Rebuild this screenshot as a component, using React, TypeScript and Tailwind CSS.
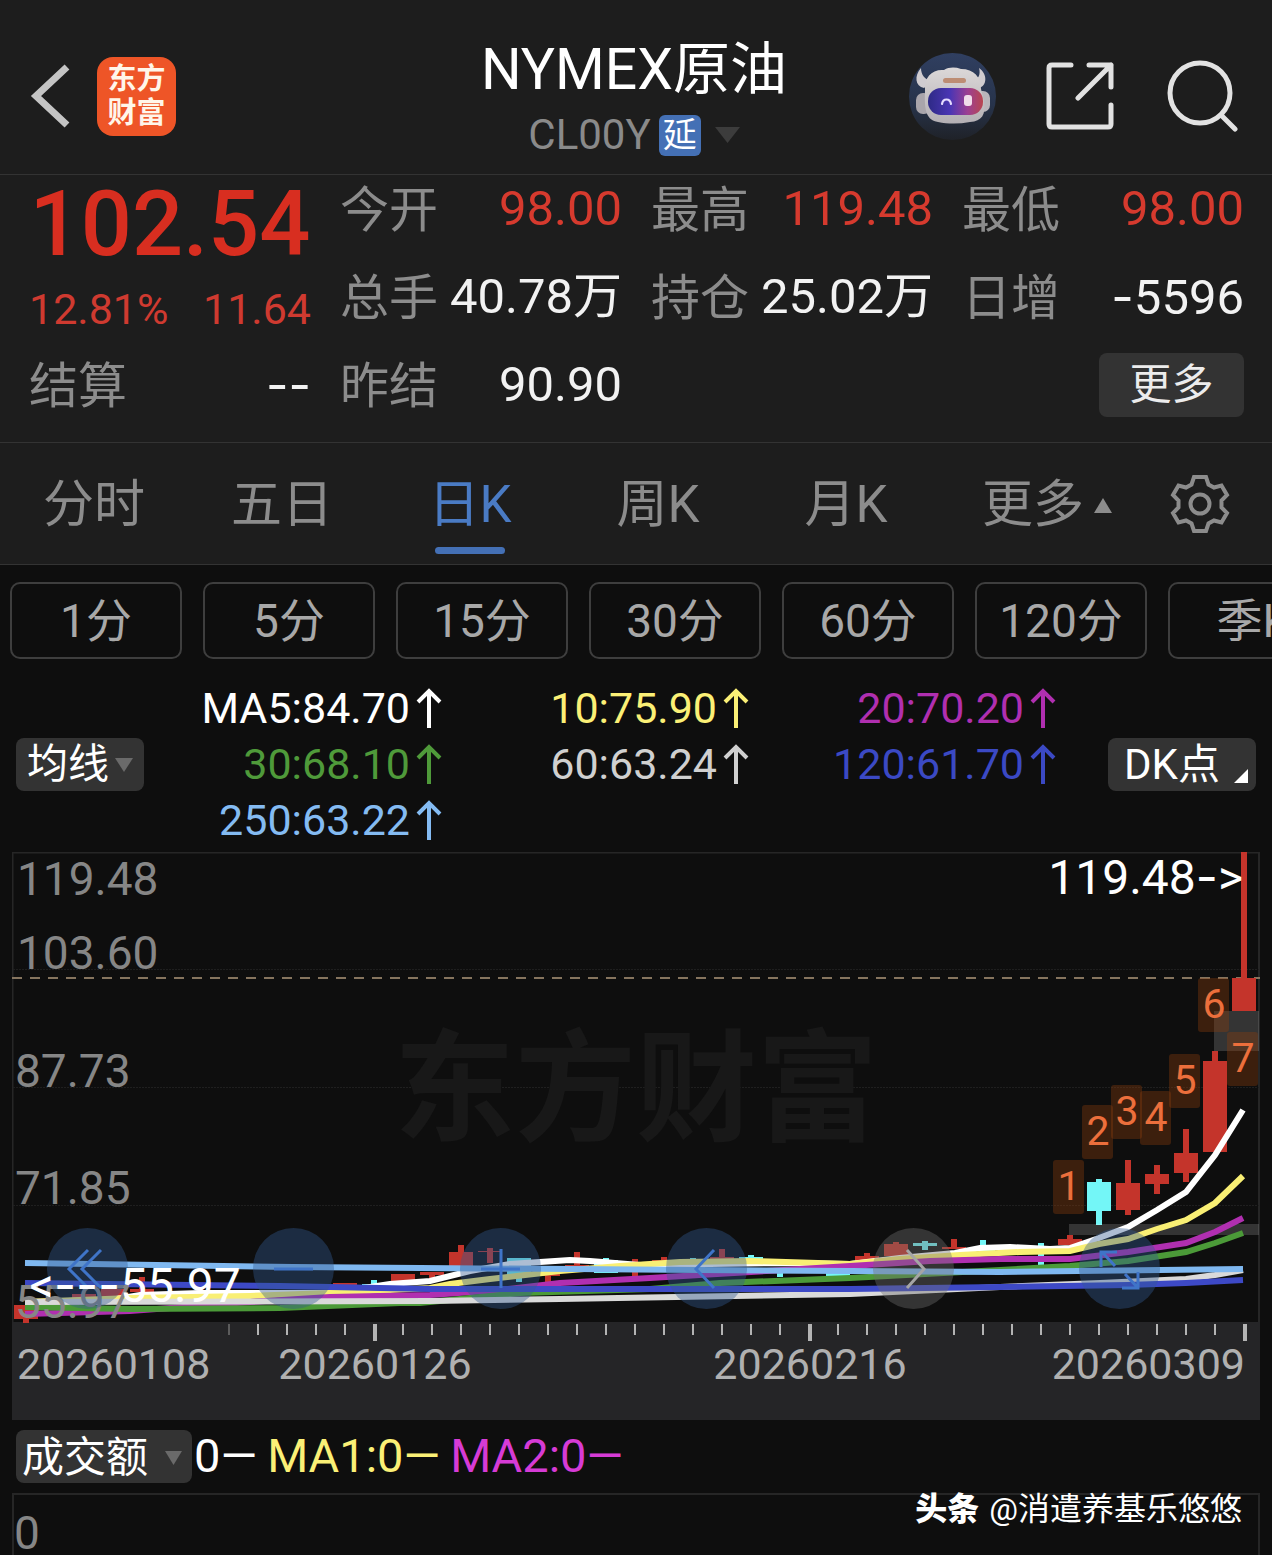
import type { ReactNode } from "react";

const UP = "#c4342b";
const DOWN = "#73f6f7";

function Triangle({ up = false, className }: { up?: boolean; className: string }) {
  return (
    <svg viewBox="0 0 24 16" className={className} aria-hidden="true" preserveAspectRatio="none">
      <path d={up ? "M0 16 12 0 24 16Z" : "M0 0 12 16 24 0Z"} fill="currentColor" />
    </svg>
  );
}

function RobotIcon() {
  return (
    <svg viewBox="0 0 87 87" className="size-[87px]" aria-hidden="true">
      <defs>
        <linearGradient id="disc" x1="0" y1="0" x2="0" y2="1">
          <stop offset="0" stopColor="#303f61" />
          <stop offset="0.6" stopColor="#27334a" />
          <stop offset="1" stopColor="#1f2228" />
        </linearGradient>
        <linearGradient id="visor" x1="0" y1="0" x2="1" y2="0">
          <stop offset="0" stopColor="#2e2a86" />
          <stop offset="0.4" stopColor="#4a35b4" />
          <stop offset="0.72" stopColor="#9c3f92" />
          <stop offset="1" stopColor="#b8454f" />
        </linearGradient>
        <linearGradient id="shell" x1="0" y1="0" x2="0" y2="1">
          <stop offset="0" stopColor="#dcd8d8" />
          <stop offset="1" stopColor="#b3afb4" />
        </linearGradient>
      </defs>
      <circle cx="43.500" cy="43.500" r="43.500" fill="url(#disc)" />
      <path d="M12 15c-7 8-6 18 3 20l8-7c-7-1-11-6-11-13Z" fill="#d0ccd0" />
      <path d="M70 15c9 6 8 18 0 20l-7-7c6-1 9-6 7-13Z" fill="#d0ccd0" />
      <rect x="7" y="40" width="15" height="21" rx="7" fill="#a9a5ab" />
      <rect x="66" y="38" width="15" height="21" rx="7" fill="#b9b5ba" />
      <path d="M16 38c-1-14 7-22 19-21 5-3 11-3 17-1 13 0 20 8 20 20l3 12c2 14-2 20-14 21-11 2-22 2-32 0-11-2-14-10-13-31Z" fill="url(#shell)" />
      <rect x="34" y="25" width="23" height="5" rx="2.500" fill="#bd8d74" />
      <rect x="19" y="35" width="55" height="27" rx="13" fill="url(#visor)" />
      <path d="M33 51c1-6 8-6 9 0" fill="none" stroke="#e6dcff" strokeWidth="2.200" strokeLinecap="round" />
      <rect x="55" y="42" width="8" height="11" rx="3" fill="#f1dcea" />
    </svg>
  );
}

function GearIcon() {
  return (
    <svg viewBox="0 0 62 62" className="size-[62px]" fill="none" stroke="currentColor" strokeWidth="4" aria-hidden="true">
      <path d="M25 4H37L39.500 11.500 45 14.500 52.500 12.500 58 22 52.500 27.500V34.500L58 40 52.500 49.500 45 47.500 39.500 50.500 37 58H25L22.500 50.500 17 47.500 9.500 49.500 4 40 9.500 34.500V27.500L4 22 9.500 12.500 17 14.500 22.500 11.500Z" />
      <circle cx="31" cy="31" r="9.500" />
    </svg>
  );
}

function Header() {
  return (
    <header className="grid grid-cols-[1fr_auto_1fr] items-center border-b border-[#333] pt-6 pr-[34px] pb-1.5 pl-[30px]">
      <div className="flex items-center gap-[27px]">
        <button aria-label="返回" className="text-[#c4c4c4]">
          <svg viewBox="0 0 40 64" className="h-16 w-10" fill="none" stroke="currentColor" strokeWidth="7" aria-hidden="true">
            <path d="M37 3 6 32 37 61" />
          </svg>
        </button>
        <a
          href="#home"
          className="flex size-[79px] flex-col items-center justify-center rounded-2xl bg-[#ee5527] text-[29px] leading-[34px] font-bold text-[#fff6ea]"
        >
          <span>东方</span>
          <span>财富</span>
        </a>
      </div>
      <div className="flex h-36 flex-col items-center pt-[13px]">
        <h1 className="text-[57px] leading-[66px] text-white">NYMEX原油</h1>
        <button className="flex items-center gap-2 text-[42px] leading-[64px] text-[#8a8a8a]">
          CL00Y
          <span className="flex h-[41px] w-[42px] items-center justify-center rounded-md bg-[#4470b5] text-[34px] text-white">
            延
          </span>
          <Triangle className="ml-1.5 h-4 w-[25px] text-[#3c3c3c]" />
        </button>
      </div>
      <div className="flex items-center justify-end text-[#e2e2e2]">
        <button aria-label="智能助手">
          <RobotIcon />
        </button>
        <button aria-label="分享" className="ml-[50px]">
          <svg viewBox="0 0 68 68" className="size-[68px]" fill="none" stroke="currentColor" strokeWidth="5" strokeLinecap="round" strokeLinejoin="round" aria-hidden="true">
            <path d="M25 3H6Q3 3 3 6V62Q3 65 6 65H62Q65 65 65 62V43M43 3H65V25M65 3 32 36" />
          </svg>
        </button>
        <button aria-label="搜索" className="ml-[52px]">
          <svg viewBox="0 0 72 72" className="size-[72px]" fill="none" stroke="currentColor" strokeWidth="5" strokeLinecap="round" aria-hidden="true">
            <circle cx="34" cy="33" r="30" />
            <path d="M55 55 69 69" />
          </svg>
        </button>
      </div>
    </header>
  );
}

function Dash({ children }: { children: string }) {
  return <span className="font-[Inter]">{children}</span>;
}

function Stat({ label, up = false, children }: { label: string; up?: boolean; children: ReactNode }) {
  return (
    <div className="flex items-center justify-between">
      <dt className="pt-1 text-[#8c8c8c]">{label}</dt>
      <dd className={up ? "text-[#d63a2e]" : "text-[#f2f2f2]"}>{children}</dd>
    </div>
  );
}

function Quote() {
  return (
    <section className="border-b border-[#333] pr-7 pb-[23px] pl-[29px]">
      <dl className="grid grid-cols-4 gap-x-[29px] gap-y-5 text-[49px] leading-[64px] whitespace-nowrap">
        <div className="row-span-2 flex flex-col text-[#d82e20]">
          <dd className="pt-1 text-center text-[90px] leading-[92px] font-medium">102.54</dd>
          <dd className="flex justify-between pt-4 text-[43px] leading-11 text-[#cf3a30]">
            <span>12.81%</span>
            <span>11.64</span>
          </dd>
        </div>
        <Stat label="今开" up>98.00</Stat>
        <Stat label="最高" up>119.48</Stat>
        <Stat label="最低" up>98.00</Stat>
        <Stat label="总手">40.78万</Stat>
        <Stat label="持仓">25.02万</Stat>
        <Stat label="日增">
          <Dash>-</Dash>5596
        </Stat>
        <Stat label="结算">
          <Dash>--</Dash>
        </Stat>
        <Stat label="昨结">90.90</Stat>
        <div className="col-start-4 flex items-center justify-end">
          <button className="w-[145px] rounded-lg bg-[#333] text-[42px] text-[#ececec]">更多</button>
        </div>
      </dl>
    </section>
  );
}

function Tabs() {
  const tabs = ["分时", "五日", "日K", "周K", "月K"];
  return (
    <nav className="grid h-[122px] grid-cols-[188fr_188fr_188fr_188fr_188fr_214fr_92fr_26fr] border-b border-[#333] text-[51px] text-[#8c8c8c]">
      {tabs.map((t) =>
        t === "日K" ? (
          <button key={t} aria-current="page" className="relative pt-1 text-[#4a7bc4]">
            {t}
            <span className="absolute bottom-2.5 left-1/2 h-[7px] w-[70px] -translate-x-1/2 rounded-full bg-[#4470b5]" />
          </button>
        ) : (
          <button key={t} className="pt-1">
            {t}
          </button>
        ),
      )}
      <button className="flex items-center justify-center gap-2.5 pt-1">
        更多
        <Triangle up className="h-[15px] w-[18px]" />
      </button>
      <button aria-label="设置" className="flex items-center justify-center">
        <GearIcon />
      </button>
    </nav>
  );
}

function Periods() {
  return (
    <div className="flex gap-[21px] overflow-hidden px-2.5 pt-[17px] text-[46px] text-[#a8a8a8]">
      {["1分", "5分", "15分", "30分", "60分", "120分", "季K"].map((p) => (
        <button key={p} className="h-[77px] w-[172px] shrink-0 rounded-[10px] border-2 border-[#3e3e3e] pt-0.5">
          {p}
        </button>
      ))}
    </div>
  );
}

function Average({ color, children }: { color: string; children: ReactNode }) {
  return (
    <li className={`flex items-center justify-end gap-1.5 ${color}`}>
      {children}
      <svg viewBox="0 0 26 40" className="h-10 w-[26px]" fill="none" stroke="currentColor" strokeWidth="4" aria-hidden="true">
        <path d="M13 40V4M2 14 13 3 24 14" />
      </svg>
    </li>
  );
}

function Averages() {
  return (
    <section className="flex items-center px-4 pt-[21px] pb-1">
      <button className="flex h-[53px] w-32 items-center justify-center gap-1.5 rounded-lg bg-[#333] pt-0.5 text-[41px] text-white">
        均线
        <Triangle className="h-3.5 w-[18px] text-[#6a6a6a]" />
      </button>
      <ul className="mr-[52px] grid flex-1 grid-cols-[298fr_307fr_307fr] text-[43px] leading-[56px]">
        <Average color="text-white">MA5:84.70</Average>
        <Average color="text-[#fbf076]">10:75.90</Average>
        <Average color="text-[#b02fb0]">20:70.20</Average>
        <Average color="text-[#4f9a3a]">30:68.10</Average>
        <Average color="text-[#d0d0d0]">60:63.24</Average>
        <Average color="text-[#3b49c4]">120:61.70</Average>
        <Average color="text-[#84bbf2]">250:63.22</Average>
      </ul>
      <button className="flex h-[53px] w-[148px] items-center rounded-lg bg-[#333] pl-4 text-[42px] text-white">
        DK点
        <svg viewBox="0 0 14 14" className="mt-6 ml-3.5 size-3.5" aria-hidden="true">
          <path d="M14 0V14H0Z" fill="currentColor" />
        </svg>
      </button>
    </section>
  );
}

type Candle = [slot: number, top: number, bottom: number, high: number, low: number, color: string];

const candles: Candle[] = [
  [0, 453, 467, 453, 471, UP],
  [2, 442, 447, 442, 447, UP],
  [3, 437, 445, 437, 445, UP],
  [4, 437, 440, 425, 440, UP],
  [5, 443, 446, 443, 446, DOWN],
  [6, 444, 446, 444, 446, UP],
  [11, 431, 435, 431, 435, UP],
  [12, 432, 434, 428, 434, DOWN],
  [13, 422, 432, 422, 432, UP],
  [14, 420, 423, 420, 426, UP],
  [15, 400, 416, 393, 416, UP],
  [16, 399, 400, 396, 411, UP],
  [17, 406, 424, 406, 430, DOWN],
  [18, 420, 424, 420, 432, UP],
  [19, 413, 415, 400, 415, UP],
  [20, 408, 421, 406, 421, DOWN],
  [21, 415, 419, 407, 425, UP],
  [22, 408, 413, 405, 413, UP],
  [23, 411, 420, 406, 420, DOWN],
  [24, 405, 412, 397, 412, UP],
  [25, 405, 409, 403, 409, DOWN],
  [26, 416, 420, 416, 425, DOWN],
  [28, 420, 424, 420, 424, DOWN],
  [29, 404, 413, 401, 413, UP],
  [30, 392, 404, 390, 404, UP],
  [31, 391, 394, 389, 398, DOWN],
  [32, 395, 397, 387, 397, UP],
  [33, 397, 399, 388, 399, DOWN],
  [34, 397, 399, 397, 403, DOWN],
  [35, 397, 398, 391, 413, DOWN],
  [36, 387, 393, 383, 393, UP],
  [37, 330, 359, 327, 373, DOWN],
  [38, 331, 358, 308, 363, UP],
  [39, 322, 332, 313, 342, UP],
  [40, 301, 321, 277, 330, UP],
  [41, 209, 300, 199, 300, UP],
  [42, 126, 159, 0, 159, UP],
];

const averageLines = [
  { color: "#ffffff", points: "13,450 98,448 128,443 188,441 248,441 318,441 378,432 418,429 458,419 498,412 558,408 578,409 628,413 698,412 768,411 838,412 888,406 943,401 968,396 998,395 1038,397 1058,396 1087,386 1116,375 1145,358 1174,340 1203,303 1231,258" },
  { color: "#f9ef74", points: "13,450 120,446 238,444 318,441 418,436 438,432 478,427 548,419 608,414 668,410 738,409 838,412 888,407 948,403 1008,400 1058,399 1087,392 1116,387 1145,377 1174,368 1203,351 1231,324" },
  { color: "#b02fb0", points: "13,462 118,459 238,450 318,445 418,443 488,438 548,431 638,426 688,423 838,414 918,409 988,407 1058,407 1116,400 1174,391 1203,380 1231,366" },
  { color: "#4b9a38", points: "13,455 118,457 268,456 388,451 408,451 508,441 638,437 708,431 838,426 988,418 1058,414 1116,409 1174,400 1203,391 1231,381" },
  { color: "#dadada", points: "13,450 418,449 548,447 838,442 988,435 1088,431 1174,427 1203,423 1231,418" },
  { color: "#3d49c6", points: "13,431 268,434 418,437 838,437 988,435 1116,433 1174,431 1231,428" },
  { color: "#7fb8f0", points: "13,411 281,415 408,416 838,419 988,420 1231,417" },
];

const badges = [
  [1057, 308],
  [1086, 253],
  [1115, 233],
  [1144, 239],
  [1173, 202],
  [1202, 126],
  [1231, 180],
];

function KLineChart() {
  const ticks = Array.from({ length: 36 }, (_, i) => i);
  return (
    <svg viewBox="0 0 1248 568" className="block w-full" role="img" aria-label="NYMEX原油 日K线图">
      <rect x="0" y="470" width="1248" height="98" fill="#252527" />
      <path d="M0.500 470V0.500H1247V470" fill="none" stroke="#262626" strokeWidth="2" />
      <path d="M1 117.500H1247M1 235.500H1247M1 353.500H1247" stroke="#1f1f1f" strokeDasharray="2 1" />
      <text x="624" y="279" textAnchor="middle" fontSize="121" fontWeight="700" fill="#181818">
        东方财富
      </text>
      <path d="M0 126H1248" stroke="#86755f" strokeWidth="2" strokeDasharray="10 8" />

      {candles.map(([slot, top, bottom, high, low, color]) => {
        const x = 14 + slot * 29;
        return (
          <g key={slot} fill={color}>
            <rect x={x - 3} y={high} width="6" height={low - high} />
            <rect x={x - 12} y={top} width="24" height={bottom - top} />
          </g>
        );
      })}

      <g fill="#ffffff" fillOpacity="0.16">
        <rect x="1057" y="372" width="190" height="11" />
        <rect x="1202" y="159" width="45" height="40" />
      </g>

      {averageLines.map((l) => (
        <polyline key={l.color} points={l.points} fill="none" stroke={l.color} strokeWidth="6" />
      ))}

      {badges.map(([x, y], i) => (
        <g key={i}>
          <rect x={x - 16} y={y} width="31" height="54" rx="3" fill="#8a3c0c" fillOpacity="0.38" />
          <text x={x} y={y + 40} textAnchor="middle" fontSize="41" fill="#ec6f3c">
            {i + 1}
          </text>
        </g>
      ))}

      <g fontSize="46" fill="#868686">
        <text x="5" y="43">119.48</text>
        <text x="5" y="117">103.60</text>
        <text x="3" y="235">87.73</text>
        <text x="3" y="352">71.85</text>
        <text x="3" y="466">55.97</text>
      </g>
      <text x="1231" y="42" textAnchor="end" fontSize="48" fill="#ffffff">
        119.48<tspan fontFamily="Inter">-</tspan>&gt;
      </text>

      {ticks.map((i) => {
        const major = i === 5 || i === 20 || i === 35;
        return (
          <rect
            key={i}
            x={216 + i * 29}
            y="472"
            width={major ? 4 : 2}
            height={major ? 17 : 11}
            fill={i === 0 ? "#5c5c5c" : "#b4b4b4"}
          />
        );
      })}
      <g fontSize="43" fill="#b0b0b0">
        <text x="5" y="527">20260108</text>
        <text x="363" y="527" textAnchor="middle">20260126</text>
        <text x="798" y="527" textAnchor="middle">20260216</text>
        <text x="1233" y="527" textAnchor="end">20260309</text>
      </g>
    </svg>
  );
}

const controls = [
  { label: "快速向左", path: "M41 22 22 41 41 60M54 22 35 41 54 60" },
  { label: "缩小", path: "M21 41H60" },
  { label: "放大", path: "M21 41H60M41 21V60" },
  { label: "向左", path: "M48 22 30 41 48 60" },
  { label: "向右", path: "M34 22 51 41 34 60" },
  { label: "全屏", path: "M22 39V24H38M23 24 36 38M59 44V60H43M59 60 46 46" },
];

function ChartControls() {
  return (
    <div className="absolute top-[66.200%] right-[8%] left-[2.800%] flex justify-between">
      {controls.map((c) => (
        <button
          key={c.label}
          aria-label={c.label}
          className={
            c.label === "向右"
              ? "rounded-full bg-[#6e6e6e]/40 text-[#a5a5a5]"
              : "rounded-full bg-[#335a92]/40 text-[#3f74c8]"
          }
        >
          <svg viewBox="0 0 81 81" className="size-[81px]" fill="none" stroke="currentColor" strokeWidth="3" aria-hidden="true">
            <path d={c.path} />
          </svg>
        </button>
      ))}
    </div>
  );
}

function LowMarker() {
  return (
    <p className="pointer-events-none absolute top-[72%] left-[1.400%] text-[48px] leading-12 text-white">
      &lt;<Dash>---</Dash>55.97
    </p>
  );
}

function Volume() {
  return (
    <section>
      <div className="flex h-[73px] items-center px-1 text-[47px]">
        <button className="flex h-[53px] w-44 items-center justify-between rounded-lg bg-[#333] pt-0.5 pr-2.5 pl-1.5 text-[42px] text-white">
          成交额
          <Triangle className="h-3.5 w-[17px] text-[#6a6a6a]" />
        </button>
        <span className="ml-0.5 text-white">0—</span>
        <span className="ml-2.5 text-[#fbf076]">MA1:0—</span>
        <span className="ml-2.5 text-[#d63bd6]">MA2:0—</span>
      </div>
      <div className="relative h-[62px] border-2 border-b-0 border-[#262626] text-[46px] leading-[76px] text-[#868686]">
        0
        <p className="absolute -top-1.5 right-4 flex items-center gap-2.5 text-[32px] leading-10 text-white">
          <b className="font-black">头条</b>
          <span>@消遣养基乐悠悠</span>
        </p>
      </div>
    </section>
  );
}

export default function App() {
  return (
    <div className="overflow-hidden bg-[#0e0e0e] font-[Roboto,'Noto_Sans_CJK_SC',sans-serif]">
      <div className="bg-[#1d1d1d]">
        <Header />
        <Quote />
        <Tabs />
      </div>
      <Periods />
      <Averages />
      <main className="px-3">
        <div className="relative">
          <KLineChart />
          <ChartControls />
          <LowMarker />
        </div>
        <Volume />
      </main>
    </div>
  );
}
